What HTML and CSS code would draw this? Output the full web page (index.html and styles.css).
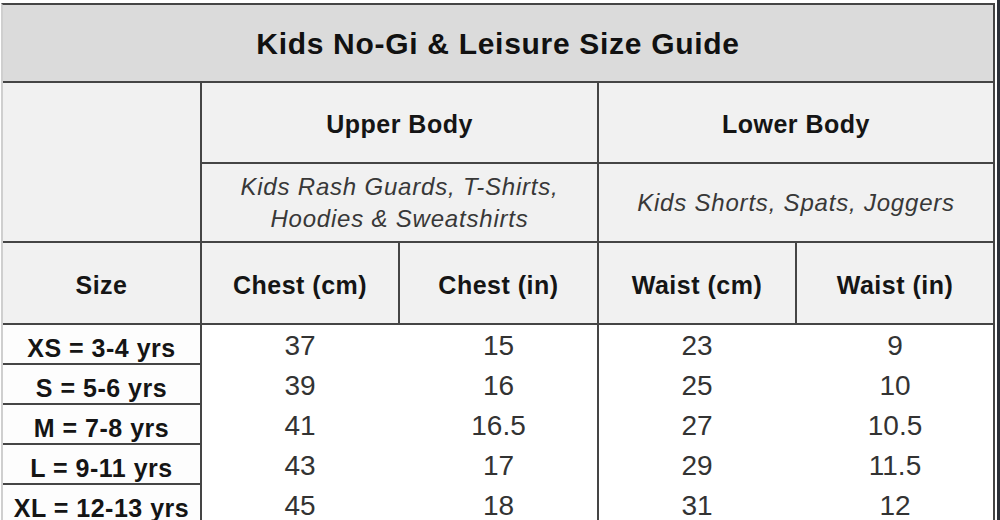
FILE: index.html
```html
<!DOCTYPE html>
<html lang="en">
<head>
<meta charset="utf-8">
<title>Kids No-Gi &amp; Leisure Size Guide</title>
<link rel="stylesheet" href="styles.css">
</head>
<body>
<div class="chart">
  <div class="cell title">Kids No-Gi &amp; Leisure Size Guide</div>
  <div class="cell blank"></div>
  <div class="cell group upper">Upper Body</div>
  <div class="cell group lower">Lower Body</div>
  <div class="cell items upper">Kids Rash Guards, T-Shirts,<br>Hoodies &amp; Sweatshirts</div>
  <div class="cell items lower">Kids Shorts, Spats, Joggers</div>
  <div class="cell head">Size</div>
  <div class="cell head">Chest (cm)</div>
  <div class="cell head">Chest (in)</div>
  <div class="cell head">Waist (cm)</div>
  <div class="cell head">Waist (in)</div>
  <div class="sizes">
    <div class="size">XS = 3-4 yrs</div>
    <div class="size">S = 5-6 yrs</div>
    <div class="size">M = 7-8 yrs</div>
    <div class="size">L = 9-11 yrs</div>
    <div class="size">XL = 12-13 yrs</div>
  </div>
  <div class="values upper">
    <div class="num">37</div><div class="num">15</div>
    <div class="num">39</div><div class="num">16</div>
    <div class="num">41</div><div class="num">16.5</div>
    <div class="num">43</div><div class="num">17</div>
    <div class="num">45</div><div class="num">18</div>
  </div>
  <div class="values lower">
    <div class="num">23</div><div class="num">9</div>
    <div class="num">25</div><div class="num">10</div>
    <div class="num">27</div><div class="num">10.5</div>
    <div class="num">29</div><div class="num">11.5</div>
    <div class="num">31</div><div class="num">12</div>
  </div>
</div>
</body>
</html>
```
FILE: styles.css
```css
html, body {
  margin: 0;
  padding: 0;
  background: #ffffff;
}

body {
  min-height: 100vh;
  box-shadow: inset -3px 0 0 #2c3038;
  overflow: hidden;
  font-family: "Liberation Sans", Arial, sans-serif;
}

.chart {
  display: grid;
  grid-template-columns: 197px 196px 197px 196px 196px;
  grid-template-rows: 76px 79px 77px 80px 198px;
  gap: 2px;
  width: max-content;
  margin: 3px 0 0 1px;
  background: #454545;
  border: 2px solid #454545;
  border-left-color: #cfcfcf;
}

.cell {
  background: #f1f1f1;
  display: flex;
  align-items: center;
  justify-content: center;
  text-align: center;
  color: #151515;
}

.title {
  grid-column: 1 / -1;
  background: #dbdbdb;
  font-size: 30px;
  font-weight: bold;
  letter-spacing: 0.7px;
  line-height: 30px;
  padding-top: 2px;
  color: #111;
}

.blank {
  grid-column: 1;
  grid-row: 2 / 4;
}

.group.upper, .items.upper { grid-column: 2 / 4; }
.group.lower, .items.lower { grid-column: 4 / 6; }

.group, .head {
  font-size: 25px;
  font-weight: bold;
  letter-spacing: 0.5px;
  line-height: 25px;
  padding-top: 4px;
}

.items {
  font-size: 24px;
  font-style: italic;
  letter-spacing: 0.8px;
  line-height: 32px;
  color: #383838;
}

.sizes {
  grid-column: 1;
  display: grid;
  grid-template-rows: repeat(5, 38px);
  row-gap: 2px;
  background: #454545;
}

.size {
  background: #fdfdfd;
  text-align: center;
  font-size: 25px;
  font-weight: bold;
  letter-spacing: 0.5px;
  line-height: 25px;
  padding-top: 11px;
  box-sizing: border-box;
  white-space: nowrap;
  color: #151515;
}

.values {
  display: grid;
  grid-template-rows: repeat(5, 38px);
  row-gap: 2px;
  column-gap: 2px;
  background: #ffffff;
}

.values.upper {
  grid-column: 2 / 4;
  grid-template-columns: 196px 197px;
}

.values.lower {
  grid-column: 4 / 6;
  grid-template-columns: 196px 196px;
}

.num {
  text-align: center;
  font-size: 28px;
  line-height: 28px;
  padding-top: 7px;
  box-sizing: border-box;
  color: #333333;
}
```
